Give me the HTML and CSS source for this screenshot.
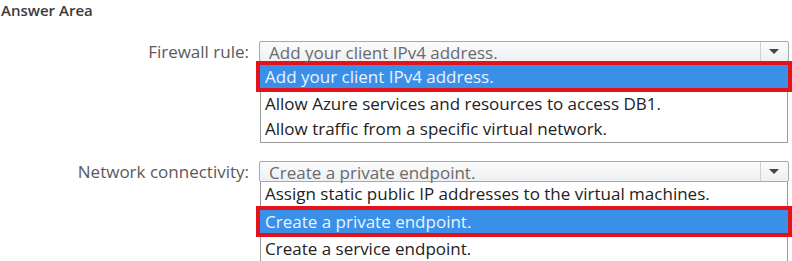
FILE: index.html
```html
<!DOCTYPE html>
<html lang="en">
<head>
  <meta charset="UTF-8">
  <title>Answer Area</title>
  <link rel="stylesheet" href="styles.css">
</head>
<body>
  <div class="answer">
    <h2 class="title">Answer Area</h2>

    <div class="row first">
      <label class="label">Firewall rule:</label>
      <div class="field">
        <div class="select">
          <span class="value">Add your client IPv4 address.</span>
          <span class="arrow"></span>
        </div>
        <ul class="options">
          <li class="selected">Add your client IPv4 address.</li>
          <li>Allow Azure services and resources to access DB1.</li>
          <li>Allow traffic from a specific virtual network.</li>
        </ul>
      </div>
    </div>

    <div class="row second">
      <label class="label">Network connectivity:</label>
      <div class="field">
        <div class="select">
          <span class="value">Create a private endpoint.</span>
          <span class="arrow"></span>
        </div>
        <ul class="options">
          <li>Assign static public IP addresses to the virtual machines.</li>
          <li class="selected">Create a private endpoint.</li>
          <li>Create a service endpoint.</li>
        </ul>
      </div>
    </div>
  </div>
</body>
</html>
```

FILE: styles.css
```css
body {
  margin: 0;
  background: #fff;
  font-family: "Open Sans", "Noto Sans", sans-serif;
  color: #222;
}
.answer {
  width: 792px;
  height: 261px;
  overflow: hidden;
}
.title {
  margin: 0;
  padding: 1px 0 0 1px;
  height: 40px;
  font-size: 15px;
  font-weight: 600;
  line-height: 18px;
  color: #3a3a3a;
}
.row {
  display: flex;
  align-items: flex-start;
}
.second {
  margin-top: 18px;
}
.label {
  width: 249px;
  text-align: right;
  padding-right: 10px;
  font-size: 17px;
  line-height: 21px;
  color: #5a5a5a;
}
.field {
  width: 530px;
}
.select {
  display: flex;
  height: 21px;
  border: 1px solid #a9a9a9;
  border-radius: 2px;
  background: linear-gradient(#fbfbfb, #eef0f3);
  box-sizing: border-box;
}
.value {
  flex: 1;
  padding-left: 9px;
  font-size: 17px;
  line-height: 21px;
  color: #6a6a6a;
  white-space: nowrap;
}
.arrow {
  width: 27px;
  border-left: 1px solid #d0d0d0;
  position: relative;
}
.arrow::after {
  content: "";
  position: absolute;
  left: 8px;
  top: 7px;
  border-left: 5px solid transparent;
  border-right: 5px solid transparent;
  border-top: 5px solid #444;
}
.options {
  list-style: none;
  margin: 0;
  padding: 0;
  border: 1px solid #9a9a9a;
  border-top: none;
  margin-left: 1px;
  margin-right: 1px;
}
.options li {
  height: 25px;
  padding-left: 4px;
  font-size: 17px;
  line-height: 24px;
  white-space: nowrap;
}
.options li.selected {
  height: 23px;
  margin: -1px -5px 0 -5px;
  padding-left: 5px;
  border: 4px solid #e4131b;
  background: #3a8fe8;
  color: #eaf3ff;
  line-height: 23px;
}
```
